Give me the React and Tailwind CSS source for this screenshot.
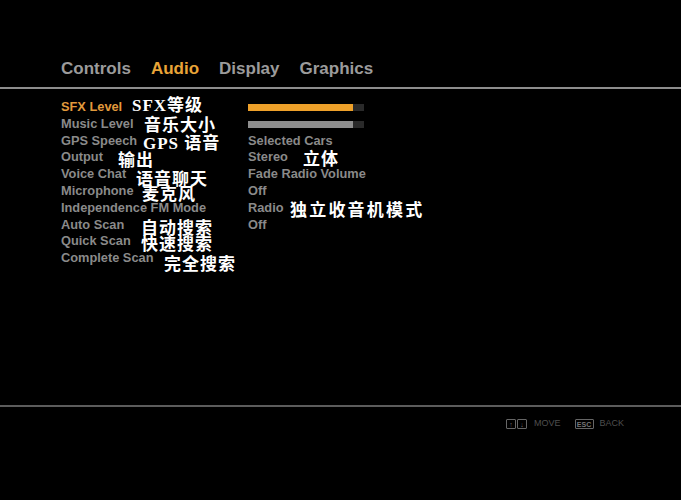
import React from 'react';

const tabs = [
  { name: 'Controls', active: false },
  { name: 'Audio', active: true },
  { name: 'Display', active: false },
  { name: 'Graphics', active: false },
];

// label, value, note on label (left px, top px), note on value
const rows = [
  { label: 'SFX Level', bar: 105, active: true, note: 'SFX等级', nx: 71, ny: 1 },
  { label: 'Music Level', bar: 105, note: '音乐大小', nx: 83, ny: 4 },
  { label: 'GPS Speech', value: 'Selected Cars', note: 'GPS 语音', nx: 82, ny: 5 },
  { label: 'Output', value: 'Stereo', note: '输出', nx: 57, ny: 6, vnote: '立体', vx: 55, vy: 5 },
  { label: 'Voice Chat', value: 'Fade Radio Volume', note: '语音聊天', nx: 75, ny: 8 },
  { label: 'Microphone', value: 'Off', note: '麦克风', nx: 81, ny: 6 },
  { label: 'Independence FM Mode', value: 'Radio', vnote: '独立收音机模式', vx: 42, vy: 5, wide: true },
  { label: 'Auto Scan', value: 'Off', note: '自动搜索', nx: 80, ny: 6 },
  { label: 'Quick Scan', note: '快速搜索', nx: 80, ny: 6 },
  { label: 'Complete Scan', note: '完全搜索', nx: 103, ny: 9 },
];

const cjk = "font-['Liberation_Serif','Noto_Sans_CJK_SC',serif]";

function Note({ text, left, top, wide }) {
  return (
    <span
      className={`absolute whitespace-nowrap text-[17px] font-bold leading-none text-white ${wide ? 'tracking-[2.2px]' : 'tracking-[1px]'} ${cjk}`}
      style={{ left, top: top - 1 }}
    >
      {text}
    </span>
  );
}

function KeyBox({ children, wide }) {
  return (
    <span
      className={`flex h-[10px] items-center justify-center rounded-[1px] border border-[#666] text-[7px] font-bold leading-none text-[#777] ${wide ? 'w-[19px]' : 'w-[10px]'}`}
    >
      {children}
    </span>
  );
}

export default function App() {
  return (
    <div className="flex h-[500px] w-[681px] flex-col bg-black font-['Liberation_Sans',Arial,sans-serif]">
      {/* Tabs */}
      <div className="flex h-[87px] items-end gap-[20px] pl-[61px] pb-[8px]">
        {tabs.map((t) => (
          <span
            key={t.name}
            className={`text-[17px] font-bold leading-[20px] ${t.active ? 'text-[#e9a437]' : 'text-[#9b9b9b]'}`}
          >
            {t.name}
          </span>
        ))}
      </div>
      <div className="h-[2px] bg-[#8d8d8d]" />

      {/* Settings list */}
      <div className="flex flex-col pt-[10px] pl-[61px]">
        {rows.map((r) => (
          <div key={r.label} className="flex h-[16.8px] items-center text-[12.8px] font-bold leading-none">
            <div className={`relative w-[187px] ${r.active ? 'text-[#e29a3c]' : 'text-[#8a8a8a]'}`}>
              {r.label}
              {r.note && <Note text={r.note} left={r.nx} top={r.ny - 4} />}
            </div>
            <div className="relative flex-1 text-[#8a8a8a]">
              {r.bar != null ? (
                <div className="flex h-[7px] w-[116px] bg-[#2a2a2a]">
                  <div
                    className={r.active ? 'bg-[#eea12a]' : 'bg-[#8e8e8e]'}
                    style={{ width: r.bar }}
                  />
                </div>
              ) : (
                r.value
              )}
              {r.vnote && <Note text={r.vnote} left={r.vx} top={r.vy - 4} wide={r.wide} />}
            </div>
          </div>
        ))}
      </div>

      <div className="flex-1" />

      <div className="mb-[10px] h-[2px] bg-[#5c5c5c]" />

      {/* Footer */}
      <div className="flex h-[14px] items-center pl-[506px] text-[9px] text-[#4f4f4f]">
        <div className="flex gap-[1px]">
          <KeyBox>↑</KeyBox>
          <KeyBox>↓</KeyBox>
        </div>
        <span className="ml-[7px]">MOVE</span>
        <span className="ml-[14px]">
          <KeyBox wide>ESC</KeyBox>
        </span>
        <span className="ml-[6px]">BACK</span>
      </div>
      <div className="h-[69px]" />
    </div>
  );
}
